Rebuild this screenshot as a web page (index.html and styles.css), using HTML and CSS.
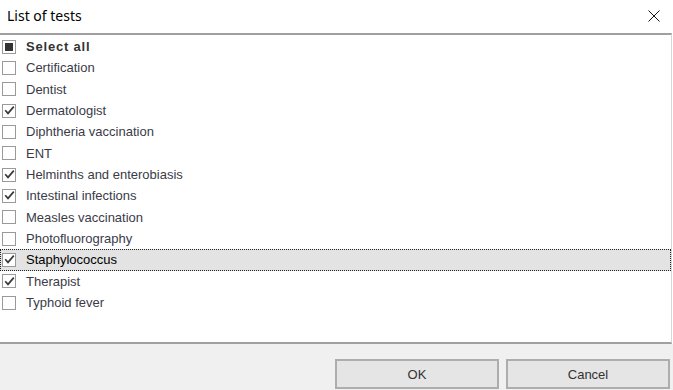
FILE: index.html
```html
<!DOCTYPE html>
<html>
<head>
<meta charset="utf-8">
<link rel="stylesheet" href="styles.css">
</head>
<body>
<div class="dialog">
  <div class="titlebar">
    <span class="title">List of tests</span>
    <svg class="close" width="12" height="12" viewBox="0 0 12 12"><path d="M0.5 0.5 L11.5 11.5 M11.5 0.5 L0.5 11.5" stroke="#111" stroke-width="1" fill="none"/></svg>
  </div>
  <div class="list">
    <div class="row bold"><span class="cb partial"><span class="fill"></span></span><span class="label">Select all</span></div>
    <div class="row"><span class="cb"></span><span class="label">Certification</span></div>
    <div class="row"><span class="cb"></span><span class="label">Dentist</span></div>
    <div class="row"><span class="cb checked"><svg viewBox="0 0 11 11"><path d="M1.2 5.2 L4 8.4 L9.8 1.6" stroke="#3a3a3a" stroke-width="1.7" fill="none"/></svg></span><span class="label">Dermatologist</span></div>
    <div class="row"><span class="cb"></span><span class="label">Diphtheria vaccination</span></div>
    <div class="row"><span class="cb"></span><span class="label">ENT</span></div>
    <div class="row"><span class="cb checked"><svg viewBox="0 0 11 11"><path d="M1.2 5.2 L4 8.4 L9.8 1.6" stroke="#3a3a3a" stroke-width="1.7" fill="none"/></svg></span><span class="label">Helminths and enterobiasis</span></div>
    <div class="row"><span class="cb checked"><svg viewBox="0 0 11 11"><path d="M1.2 5.2 L4 8.4 L9.8 1.6" stroke="#3a3a3a" stroke-width="1.7" fill="none"/></svg></span><span class="label">Intestinal infections</span></div>
    <div class="row"><span class="cb"></span><span class="label">Measles vaccination</span></div>
    <div class="row"><span class="cb"></span><span class="label">Photofluorography</span></div>
    <div class="row focused"><span class="cb checked"><svg viewBox="0 0 11 11"><path d="M1.2 5.2 L4 8.4 L9.8 1.6" stroke="#3a3a3a" stroke-width="1.7" fill="none"/></svg></span><span class="label">Staphylococcus</span></div>
    <div class="row"><span class="cb checked"><svg viewBox="0 0 11 11"><path d="M1.2 5.2 L4 8.4 L9.8 1.6" stroke="#3a3a3a" stroke-width="1.7" fill="none"/></svg></span><span class="label">Therapist</span></div>
    <div class="row"><span class="cb"></span><span class="label">Typhoid fever</span></div>
  </div>
  <div class="footer">
    <button class="btn">OK</button>
    <button class="btn">Cancel</button>
  </div>
</div>
</body>
</html>
```
FILE: styles.css
```css
html, body {
  margin: 0;
  padding: 0;
  background: #ffffff;
}
.dialog {
  width: 673px;
  height: 390px;
  display: flex;
  flex-direction: column;
  overflow: hidden;
}
.titlebar {
  height: 33px;
  display: flex;
  align-items: center;
  justify-content: space-between;
  padding: 0 13px 2px 7px;
  box-sizing: border-box;
  background: #fff;
}
.title {
  font-family: "Noto Sans", sans-serif;
  font-size: 14px;
  color: #000;
}
.close {
  display: block;
}
.list {
  margin-right: 1px;
  height: 311px;
  box-sizing: border-box;
  border-top: 2px solid #a0a0a0;
  border-right: 1px solid #d7d7d7;
  border-bottom: 2px solid #a0a0a0;
  padding-top: 1px;
  background: #fff;
}
.row {
  height: 21.33px;
  display: flex;
  align-items: center;
  box-sizing: border-box;
  font-family: "Liberation Sans", Arial, sans-serif;
  font-size: 13px;
  color: #3b3b48;
}
.row.bold {
  font-weight: bold;
  letter-spacing: 0.8px;
  color: #333;
}
.row.focused {
  background: #e3e3e3;
  border: 1px dotted #222;
  color: #000;
}
.cb {
  width: 14px;
  height: 14px;
  box-sizing: border-box;
  border: 1px solid #9a9a9a;
  background: #fff;
  margin-left: 2px;
  margin-right: 10px;
  display: flex;
  align-items: center;
  justify-content: center;
}
.row.focused .cb {
  margin-left: 1px;
}
.cb svg {
  width: 11px;
  height: 11px;
  display: block;
}
.cb.partial .fill {
  width: 8px;
  height: 8px;
  background: #333;
}
.footer {
  flex: 1;
  background: #f0f0f0;
  display: flex;
  justify-content: flex-end;
  align-items: flex-start;
  gap: 7px;
  padding: 15px 3px 0 0;
}
.btn {
  width: 164px;
  height: 30px;
  box-sizing: border-box;
  border: 2px solid #adadad;
  background: #e5e5e5;
  font-family: "Liberation Sans", Arial, sans-serif;
  font-size: 13px;
  color: #333;
  padding: 0;
}
```
